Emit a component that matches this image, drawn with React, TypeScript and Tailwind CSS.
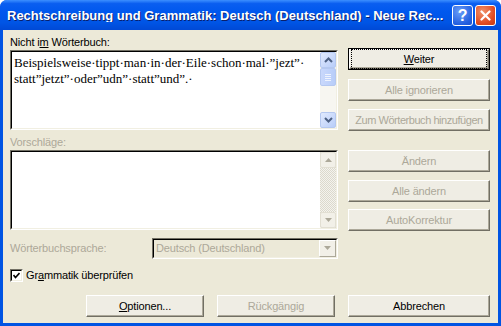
import type { ReactNode } from 'react'

const ui = "font-['Liberation_Sans',Arial,sans-serif] text-[11px] leading-[13px] tracking-[-0.15px]"

function XpButton({
  children,
  disabled,
  isDefault,
  className = '',
}: {
  children: ReactNode
  disabled?: boolean
  isDefault?: boolean
  className?: string
}) {
  return (
    <button
      type="button"
      className={`flex h-[22px] items-center justify-center ${isDefault ? 'border border-black' : ''} ${className}`}
    >
      <span className="flex h-full w-full items-center justify-center border border-t-white border-l-white border-r-[#716f64] border-b-[#716f64] bg-[#efede4] shadow-[inset_-1px_-1px_0_#aca899]">
        <span
          className={`flex h-full w-full items-center justify-center whitespace-nowrap ${isDefault ? 'm-[2px] outline-1 outline-dotted outline-black' : ''} ${disabled ? 'text-[#aca899]' : 'text-black'}`}
        >
          {children}
        </span>
      </span>
    </button>
  )
}

function Arrow({ up }: { up?: boolean }) {
  return (
    <svg width="9" height="6" viewBox="0 0 9 6" className={up ? '' : 'rotate-180'}>
      <path d="M1 5 L4.5 1.5 L8 5" fill="none" stroke="#4d6185" strokeWidth={2} />
    </svg>
  )
}

function ScrollBtn({ up, disabled }: { up?: boolean; disabled?: boolean }) {
  return (
    <div
      className={`flex h-[16px] w-[16px] items-center justify-center rounded-[2px] border ${
        disabled
          ? 'border-[#e2dfd3] bg-[#f2f0e8]'
          : 'border-[#b5c8f0] bg-[linear-gradient(135deg,#e1eafe,#b8cdf9)]'
      }`}
    >
      {disabled ? (
        <svg width="7" height="4" viewBox="0 0 7 4" className={up ? '' : 'rotate-180'}>
          <path d="M0 4 L3.5 0 L7 4 Z" fill="#aca899" />
        </svg>
      ) : (
        <Arrow up={up} />
      )}
    </div>
  )
}

function Sunken({ children, className = '' }: { children: ReactNode; className?: string }) {
  return (
    <div
      className={`border border-t-[#716f64] border-l-[#716f64] border-r-white border-b-white ${className}`}
    >
      <div className="flex h-full w-full border border-t-black border-l-black border-r-[#f1efe2] border-b-[#f1efe2] bg-white">
        {children}
      </div>
    </div>
  )
}

export default function App() {
  const dot = '\u00b7'
  const line1 = `Beispielsweise${dot}tippt${dot}man${dot}in${dot}der${dot}Eile${dot}schon${dot}mal${dot}\u201djezt\u201d${dot}`
  const line2 = `statt\u201djetzt\u201d${dot}oder\u201dudn\u201d${dot}statt\u201dund\u201d.${dot}`

  return (
    <div className={`flex h-[326px] w-[501px] flex-col overflow-hidden rounded-t-[7px] bg-[#0054e3] ${ui}`}>
      {/* title bar */}
      <div className="flex h-[30px] shrink-0 items-center bg-[linear-gradient(to_bottom,#3c8fff_0%,#0a5ef0_12%,#0058ee_40%,#0055e5_75%,#0049d6_100%)] pl-[7px] pr-[5px]">
        <span className="flex-1 truncate pt-[1px] font-['Liberation_Sans',Arial,sans-serif] text-[13px] font-bold tracking-normal text-white [text-shadow:1px_1px_0_#0a1f6b]">
          Rechtschreibung und Grammatik: Deutsch (Deutschland) - Neue Rec...
        </span>
        <div className="flex gap-[2px]">
          <div className="flex h-[21px] w-[21px] items-center justify-center rounded-[3px] border border-white bg-[radial-gradient(circle_at_35%_30%,#6a9ef8,#2460e0_70%,#1a4fcf)] text-[16px] font-bold text-white">
            ?
          </div>
          <div className="flex h-[21px] w-[21px] items-center justify-center rounded-[3px] border border-white bg-[radial-gradient(circle_at_35%_30%,#f0926a,#e04a21_65%,#c23a12)]">
            <svg width="11" height="11" viewBox="0 0 11 11">
              <path d="M1.5 1.5 L9.5 9.5 M9.5 1.5 L1.5 9.5" stroke="white" strokeWidth="2.2" strokeLinecap="round" />
            </svg>
          </div>
        </div>
      </div>

      {/* body */}
      <div className="mx-[3px] mb-[3px] flex flex-1 flex-col bg-[#ece9d8] pl-[7px] pr-[8px] pt-[6px]">
        <div className="flex gap-[10px]">
          {/* left column */}
          <div className="flex w-[328px] flex-col">
            <div className="h-[14px]">
              Nicht i<span className="underline">m</span> Wörterbuch:
            </div>
            <Sunken className="h-[80px]">
              <div className="flex-1 whitespace-nowrap pl-[2px] pt-[3px] font-['Liberation_Serif','Times_New_Roman',serif] text-[13px] leading-[16px] tracking-normal text-black">
                <div>{line1}</div>
                <div>{line2}</div>
              </div>
              <div className="flex w-[16px] flex-col bg-[#f7f6f1]">
                <ScrollBtn up />
                <div className="flex h-[18px] items-center justify-center rounded-[2px] border border-[#b5c8f0] bg-[linear-gradient(90deg,#c9d8fc,#b8cdf9)]">
                  <div className="flex flex-col gap-[1px]">
                    <div className="h-px w-[6px] bg-[#eef3fe]" />
                    <div className="h-px w-[6px] bg-[#eef3fe]" />
                    <div className="h-px w-[6px] bg-[#eef3fe]" />
                    <div className="h-px w-[6px] bg-[#eef3fe]" />
                  </div>
                </div>
                <div className="flex-1" />
                <ScrollBtn />
              </div>
            </Sunken>

            <div className="mt-[6px] h-[14px] text-[#aca899]">Vorschläge:</div>
            <Sunken className="h-[80px]">
              <div className="flex-1" />
              <div className="flex w-[16px] flex-col bg-[repeating-conic-gradient(#f4f3ee_0%_25%,#dcd9cc_0%_50%)] bg-[length:2px_2px]">
                <ScrollBtn up disabled />
                <div className="flex-1" />
                <ScrollBtn disabled />
              </div>
            </Sunken>

            <div className="mt-[8px] flex h-[20px] items-center">
              <div className="w-[142px] text-[#aca899]">Wörterbuchsprache:</div>
              <div className="flex h-[21px] flex-1 items-stretch border border-[#716f64] border-r-white border-b-white">
                <div className="flex flex-1 items-center border border-t-black border-l-black border-r-[#f1efe2] border-b-[#f1efe2] bg-[#ece9d8] pl-[2px] text-[#aca899]">
                  <span className="flex-1">Deutsch (Deutschland)</span>
                  <div className="flex h-[17px] w-[17px] items-center justify-center border border-t-white border-l-white border-r-[#aca899] border-b-[#aca899] bg-[#f2f0e8]">
                    <svg width="7" height="4" viewBox="0 0 7 4">
                      <path d="M0 0 L3.5 4 L7 0 Z" fill="#aca899" />
                    </svg>
                  </div>
                </div>
              </div>
            </div>
          </div>

          {/* right column */}
          <div className="flex w-[142px] flex-col pt-[12px]">
            <XpButton isDefault>
              <span>
                <span className="underline">W</span>eiter
              </span>
            </XpButton>
            <XpButton disabled className="mt-[9px]">
              Alle ignorieren
            </XpButton>
            <XpButton disabled className="mt-[8px]">
              <span className="tracking-[-0.45px]">Zum Wörterbuch hinzufügen</span>
            </XpButton>
            <XpButton disabled className="mt-[19px]">
              Ändern
            </XpButton>
            <XpButton disabled className="mt-[8px]">
              Alle ändern
            </XpButton>
            <XpButton disabled className="mt-[7px]">
              AutoKorrektur
            </XpButton>
          </div>
        </div>

        {/* checkbox */}
        <div className="mt-[11px] flex items-center gap-[3px]">
          <div className="flex h-[13px] w-[13px] items-center justify-center border border-t-[#716f64] border-l-[#716f64] border-r-white border-b-white">
            <div className="flex h-full w-full items-center justify-center border border-t-black border-l-black border-r-[#f1efe2] border-b-[#f1efe2] bg-white">
              <svg width="7" height="7" viewBox="0 0 7 7">
                <path d="M0.5 3 L2.5 5.5 L6.5 1" fill="none" stroke="black" strokeWidth="1.6" />
              </svg>
            </div>
          </div>
          <span className="text-black">
            Gr<span className="underline">a</span>mmatik überprüfen
          </span>
        </div>

        {/* bottom buttons */}
        <div className="mt-[13px] flex justify-end gap-[13px]">
          <XpButton className="w-[118px]">
            <span>
              <span className="underline">O</span>ptionen...
            </span>
          </XpButton>
          <XpButton disabled className="w-[118px]">
            Rückgängig
          </XpButton>
          <XpButton className="w-[142px]">Abbrechen</XpButton>
        </div>
      </div>
    </div>
  )
}
